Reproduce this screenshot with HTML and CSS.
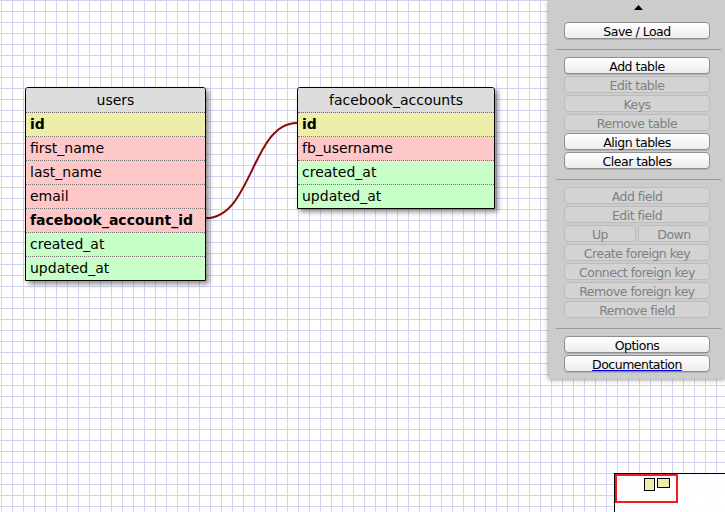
FILE: index.html
```html
<!DOCTYPE html>
<html>
<head>
<meta charset="utf-8">
<link rel="stylesheet" href="styles.css">
</head>
<body>
<div class="canvas">
  <svg class="relations" width="725" height="512" viewBox="0 0 725 512">
    <path d="M206 218 C252 218 252 123 297 123" />
  </svg>

  <div class="table t-users">
    <div class="title">users</div>
    <div class="row num pk">id</div>
    <div class="row chr">first_name</div>
    <div class="row chr">last_name</div>
    <div class="row chr">email</div>
    <div class="row chr pk">facebook_account_id</div>
    <div class="row dt">created_at</div>
    <div class="row dt">updated_at</div>
  </div>

  <div class="table t-fb">
    <div class="title">facebook_accounts</div>
    <div class="row num pk">id</div>
    <div class="row chr">fb_username</div>
    <div class="row dt">created_at</div>
    <div class="row dt">updated_at</div>
  </div>
</div>

<div class="controls">
  <svg class="toggle" width="9" height="5" viewBox="0 0 9 5"><polygon points="0,5 4.5,0 9,5" /></svg>
  <div class="group">
    <div class="btn">Save / Load</div>
  </div>
  <div class="sep"></div>
  <div class="group">
    <div class="btn">Add table</div>
    <div class="btn off">Edit table</div>
    <div class="btn off">Keys</div>
    <div class="btn off">Remove table</div>
    <div class="btn">Align tables</div>
    <div class="btn">Clear tables</div>
  </div>
  <div class="sep"></div>
  <div class="group">
    <div class="btn off">Add field</div>
    <div class="btn off">Edit field</div>
    <div class="pair">
      <div class="btn off">Up</div>
      <div class="btn off">Down</div>
    </div>
    <div class="btn off">Create foreign key</div>
    <div class="btn off">Connect foreign key</div>
    <div class="btn off">Remove foreign key</div>
    <div class="btn off">Remove field</div>
  </div>
  <div class="sep"></div>
  <div class="group">
    <div class="btn">Options</div>
    <div class="btn"><a class="doc" href="#">Documentation</a></div>
  </div>
</div>

<div class="minimap">
  <div class="viewport"></div>
  <div class="mini m-users"></div>
  <div class="mini m-fb"></div>
</div>
</body>
</html>
```

FILE: styles.css
```css
html, body {
  margin: 0;
  padding: 0;
}

body {
  width: 725px;
  height: 512px;
  overflow: hidden;
  position: relative;
  background-color: #fff;
  background-image:
    linear-gradient(to right, #d4d4f2 1px, transparent 1px),
    linear-gradient(to bottom, #d4d4f2 1px, transparent 1px);
  background-size: 11px 11px;
  background-position: 1px 0;
  font-family: "DejaVu Sans", Verdana, sans-serif;
  color: #000;
}

.canvas {
  position: absolute;
  inset: 0;
}

.relations {
  position: absolute;
  left: 0;
  top: 0;
}

.relations path {
  fill: none;
  stroke: #8a0a0a;
  stroke-width: 2;
}

/* tables */
.table {
  position: absolute;
  border: 1px solid #000;
  border-radius: 3px 3px 0 0;
  overflow: hidden;
  box-shadow: 3px 3px 5px rgba(0, 0, 0, 0.45);
  font-size: 14px;
}

.t-users {
  left: 25px;
  top: 87px;
  width: 179px;
}

.t-fb {
  left: 297px;
  top: 87px;
  width: 196px;
}

.title {
  height: 24px;
  line-height: 24px;
  text-align: center;
  background: #dddddd;
  border-bottom: 1px dotted #666;
}

.row {
  height: 23px;
  line-height: 23px;
  padding-left: 4px;
  white-space: nowrap;
  border-bottom: 1px dotted #777;
}

.row:last-child {
  border-bottom: 0;
}

.num { background: rgb(238, 238, 170); }
.chr { background: rgb(255, 200, 200); }
.dt  { background: rgb(200, 255, 200); }
.pk  { font-weight: bold; }

/* control panel */
.controls {
  position: absolute;
  left: 549px;
  top: 0;
  width: 176px;
  height: 379px;
  box-sizing: border-box;
  padding: 5px 4px 0 7px;
  background: #cccccc;
  box-shadow: 0 0 5px rgba(0, 0, 0, 0.55);
}

.toggle {
  display: block;
  margin: 0 auto 12px;
}

.toggle polygon {
  fill: #000;
}

.group {
  display: flex;
  flex-direction: column;
  gap: 2px;
  margin-left: 8px;
  width: 146px;
}

.pair {
  display: flex;
  gap: 2px;
}

.pair .btn {
  flex: 1;
}

.sep {
  height: 1px;
  background: #999;
  margin: 10px 0 7px;
}

.btn {
  box-sizing: border-box;
  height: 17px;
  padding-top: 1px;
  line-height: 15px;
  border: 1px solid #8f8f8f;
  border-radius: 4px;
  background: linear-gradient(to bottom, #ffffff 0%, #f6f6f6 50%, #ececec 100%);
  box-shadow: 0 1px 0 rgba(0, 0, 0, 0.12);
  text-align: center;
  font-size: 12.5px;
  letter-spacing: -0.5px;
  white-space: nowrap;
  color: #000;
}

.btn.off {
  background: #d3d3d3;
  border-color: #bcbcbc;
  box-shadow: none;
  color: #808080;
}

.doc {
  color: #000;
  text-decoration: underline;
  text-decoration-color: #0000ee;
}

/* minimap */
.minimap {
  position: absolute;
  left: 614px;
  top: 473px;
  width: 130px;
  height: 60px;
  border: 1px solid #000;
  background: rgba(255, 255, 255, 0.9);
}

.viewport {
  position: absolute;
  left: 0;
  top: 0;
  width: 63px;
  height: 29px;
  box-sizing: border-box;
  border: 2px solid #f01c1c;
}

.mini {
  position: absolute;
  box-sizing: border-box;
  border: 1px solid #000;
  background: rgb(238, 238, 170);
}

.m-users {
  left: 29px;
  top: 4px;
  width: 11px;
  height: 13px;
}

.m-fb {
  left: 42px;
  top: 4px;
  width: 13px;
  height: 10px;
}
```
